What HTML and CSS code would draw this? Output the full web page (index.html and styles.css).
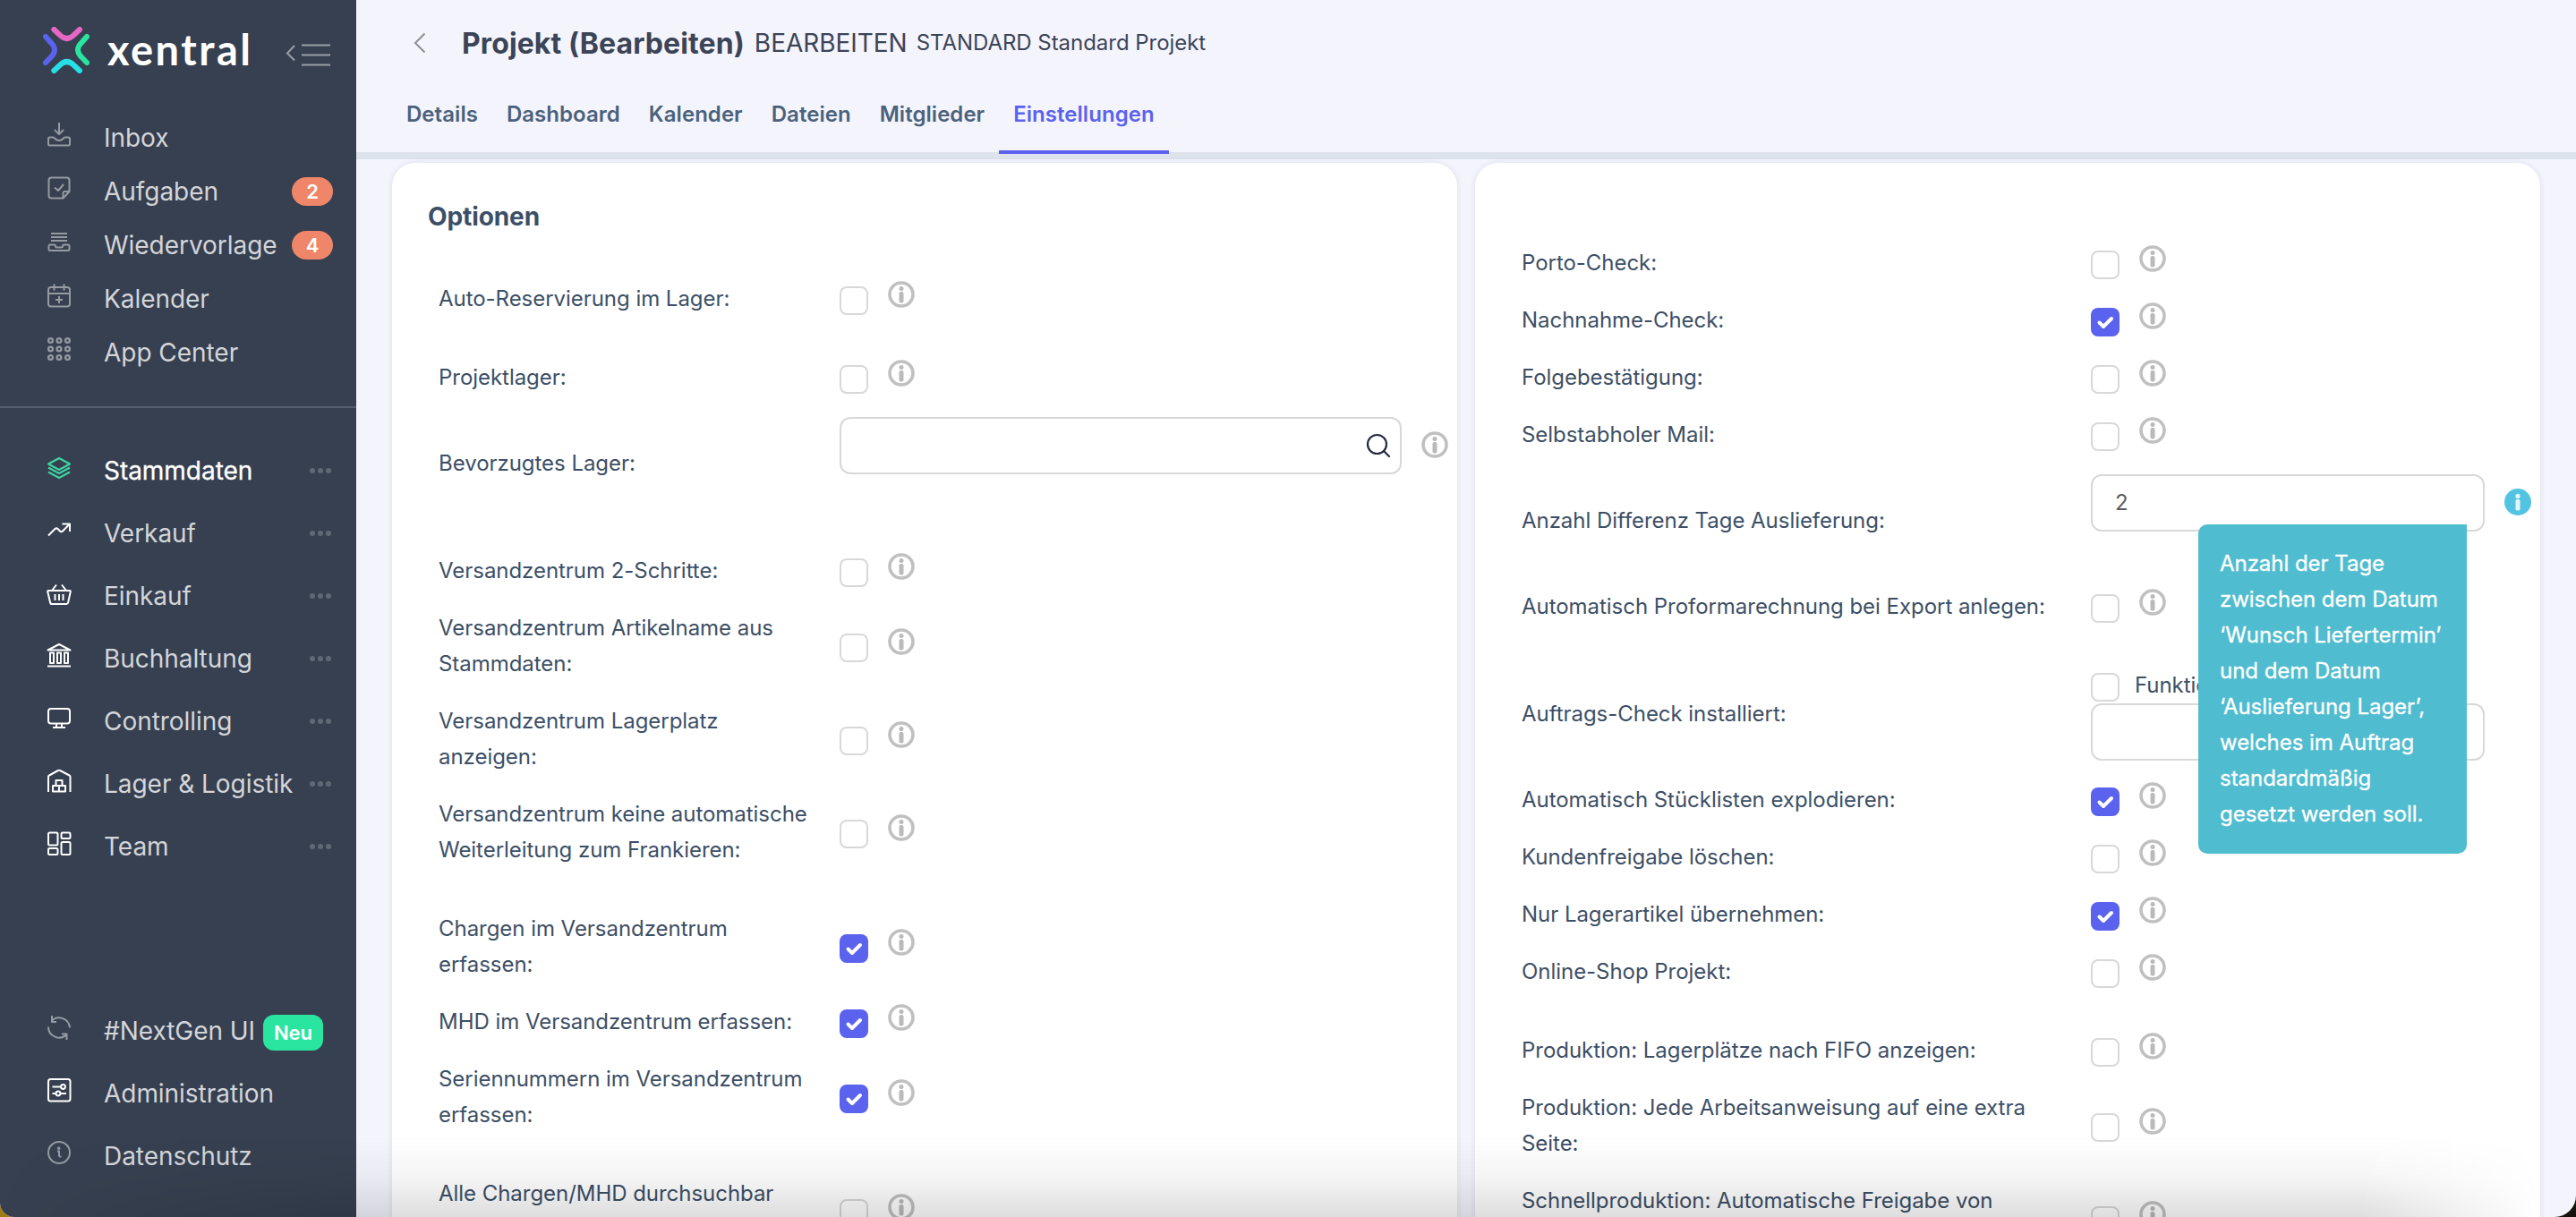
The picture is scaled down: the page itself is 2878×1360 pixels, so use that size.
FILE: index.html
```html
<!DOCTYPE html>
<html lang="de">
<head>
<meta charset="utf-8">
<title>Projekt (Bearbeiten)</title>
<link rel="stylesheet" href="styles.css">
</head>
<body>
<svg class="sprite" aria-hidden="true">
  <symbol id="info" viewBox="0 0 30 30"><circle cx="15" cy="15" r="13" fill="none" stroke="#c0c0c0" stroke-width="3.600"/><circle cx="15" cy="8.600" r="2.500" fill="#bababa"/><rect x="12.500" y="12" width="5" height="12.500" rx="2" fill="#bababa"/></symbol>
  <symbol id="info-on" viewBox="0 0 30 30"><circle cx="15" cy="15" r="15" fill="#53c3e2"/><circle cx="15" cy="8.400" r="2.600" fill="#e4f7fc"/><rect x="12.500" y="12" width="5" height="12.400" rx="1.600" fill="#e4f7fc"/></symbol>
  <symbol id="dots" viewBox="0 0 24 6"><circle cx="3" cy="3" r="3"/><circle cx="12" cy="3" r="3"/><circle cx="21" cy="3" r="3"/></symbol>
</svg>
<div class="app">
  <aside class="sidebar">
    <div class="brand">
      <svg class="logo" viewBox="0 0 156 156" fill="none" stroke-width="18" stroke-linecap="round"><path stroke="#e667c4" d="M37 9 56 27Q80 51 104 27L123 9"/><path stroke="#5b62ee" d="M9 33 26 52Q52 77 26 102L9 120"/><path stroke="#29e5a0" d="M147 33 130 52Q104 77 130 102L147 120"/><path stroke="#27e0e6" d="M37 147 56 129Q80 105 104 129L123 147"/></svg>
      <span class="wordmark">xentral</span>
      <svg class="collapse" viewBox="0 0 52 26" fill="none" stroke="#9a9fa8" stroke-width="2"><path d="M10 3 2 11.500l8 8M18 2.500h32M18 13.500h32M18 24.500h32"/></svg>
    </div>
    <nav class="nav nav-top">
      <a><svg viewBox="0 0 28 28"><path d="M14 1v12M9 9l5 5 5-5M3.500 17.500h4c2 0 2 3.500 6.500 3.500s4.500-3.500 6.500-3.500h4q1.500 0 1.500 1.500v6q0 1.500-1.500 1.500h-21Q2 26.500 2 25v-6q0-1.500 1.500-1.500z"/></svg>Inbox</a>
      <a><svg viewBox="0 0 28 28"><path d="M5.500 2.500h17q3 0 3 3V18l-7 7.500h-13q-3 0-3-3v-17q0-3 3-3zM18.500 25V20q0-2 2-2h5M9 13.500l4 3.500 6-7"/></svg>Aufgaben<b class="count">2</b></a>
      <a><svg viewBox="0 0 28 28"><path d="M5 5h18M5 9h18M5 13h18M4 17.500h4.500q1.500 0 1.500 1.500t1.500 1.500h5Q18 20.500 18 19t1.500-1.500H24q1.500 0 1.500 1.500v3.500q0 1.500-1.500 1.500H4q-1.500 0-1.500-1.500V19q0-1.500 1.500-1.500z"/></svg>Wiedervorlage<b class="count">4</b></a>
      <a><svg viewBox="0 0 28 28"><rect x="2" y="5" width="24" height="21.500" rx="3"/><path d="M2 12h24M8.500 1.500v7M19.500 1.500v7M14 15v8M10 19h8"/></svg>Kalender</a>
      <a><svg viewBox="0 0 28 28" class="thick"><circle cx="4.500" cy="4.500" r="2.400"/><circle cx="14" cy="4.500" r="2.400"/><circle cx="23.500" cy="4.500" r="2.400"/><circle cx="4.500" cy="14" r="2.400"/><circle cx="14" cy="14" r="2.400"/><circle cx="23.500" cy="14" r="2.400"/><circle cx="4.500" cy="23.500" r="2.400"/><circle cx="14" cy="23.500" r="2.400"/><circle cx="23.500" cy="23.500" r="2.400"/></svg>App Center</a>
    </nav>
    <nav class="nav nav-main">
      <a class="active"><svg viewBox="0 0 28 28"><path d="M14 4 26 10.500 14 17 2 10.500zM2 14.500 14 21l12-6.500M2 19.500 14 26l12-6.500"/></svg>Stammdaten<svg class="dots"><use href="#dots"/></svg></a>
      <a><svg viewBox="0 0 28 28"><path d="M2 20.500 9.500 13q1.500-1.500 3 0l2.500 2.500q1.500 1.500 3 0L25.500 8M17.500 7.500H26V16"/></svg>Verkauf<svg class="dots"><use href="#dots"/></svg></a>
      <a><svg viewBox="0 0 28 28"><path d="M2 12h24q1 0 .8 1l-2.600 12q-.4 2-2 2H6q-1.700 0-2-2L1.200 13q-.2-1 .8-1zM11 5.500 6 12M17 5.500l5 6.500M9.500 16v7M14 16v7M18.500 16v7"/></svg>Einkauf<svg class="dots"><use href="#dots"/></svg></a>
      <a><svg viewBox="0 0 28 28"><path d="M14 2 26.500 8.500H1.500zM4 11.500h4v11.500H4zM12 11.500h4v11.500h-4zM20 11.500h4v11.500h-4zM1 26.500h26"/></svg>Buchhaltung<svg class="dots"><use href="#dots"/></svg></a>
      <a><svg viewBox="0 0 28 28"><rect x="2" y="4" width="24" height="16.500" rx="3"/><path d="M11 20.500v4M17 20.500v4M7 25h14"/></svg>Controlling<svg class="dots"><use href="#dots"/></svg></a>
      <a><svg viewBox="0 0 28 28"><path d="M2 27V10q0-1 1-1.500L13 3q1-.6 2 0L25.500 8.500q1 .5 1 1.500v17M10.500 14h7v6h-7zM7 20h7v6.500H7zM14 20h7v6.500h-7z"/></svg>Lager &amp; Logistik<svg class="dots"><use href="#dots"/></svg></a>
      <a><svg viewBox="0 0 28 28"><rect x="2" y="2.500" width="10.500" height="14" rx="1.500"/><rect x="16.500" y="2.500" width="10" height="6.500" rx="1.500"/><rect x="2" y="20" width="10.500" height="7" rx="1.500"/><rect x="16.500" y="13" width="10" height="14" rx="1.500"/></svg>Team<svg class="dots"><use href="#dots"/></svg></a>
    </nav>
    <nav class="nav nav-bottom">
      <a><svg viewBox="0 0 28 28" class="dim"><path d="M26 14.500A12 12 0 0 0 5.500 7M6 1v7h5M2 13.500A12 12 0 0 0 22.500 22M17 21.500h5.500V28"/></svg>#NextGen UI<b class="new">Neu</b></a>
      <a><svg viewBox="0 0 28 28"><rect x="2" y="2" width="24.500" height="24.500" rx="2.500"/><path d="M6.500 10.500h9.500M6.500 18h4M16 18h6"/><circle cx="18.500" cy="10.500" r="2.400"/><circle cx="13" cy="18" r="2.400"/></svg>Administration</a>
      <a><svg viewBox="0 0 28 28" class="dim"><circle cx="14" cy="14" r="12"/><path d="M12 12.500h2v4.500q0 2 2.500 1.500"/><circle cx="13.700" cy="9.300" r=".8"/></svg>Datenschutz</a>
    </nav>
  </aside>

  <main class="main">
    <header class="head">
      <div class="titlebar">
        <svg class="back" viewBox="0 0 14 24" fill="none" stroke="#8b8f96" stroke-width="2"><path d="M12.500 1.500 2 12l10.500 10.500"/></svg>
        <h1>Projekt (Bearbeiten)</h1><span class="mode">BEARBEITEN</span><span class="name">STANDARD Standard Projekt</span>
      </div>
      <div class="tabs">
        <a>Details</a><a>Dashboard</a><a>Kalender</a><a>Dateien</a><a>Mitglieder</a><a class="current">Einstellungen</a>
      </div>
    </header>

    <div class="cards">
      <section class="card card-left">
        <h2>Optionen</h2>
        <div class="row"><label>Auto-Reservierung im Lager:</label><div class="ctl"><i class="cb"></i><svg class="inf"><use href="#info"/></svg></div></div>
        <div class="row gap"><label>Projektlager:</label><div class="ctl"><i class="cb"></i><svg class="inf"><use href="#info"/></svg></div></div>
        <div class="row tall"><label>Bevorzugtes Lager:</label><div class="ctl"><div class="input wide"><svg class="search" viewBox="0 0 28 28" fill="none" stroke="#262b42" stroke-width="2.200" stroke-linecap="round"><circle cx="12.500" cy="12.500" r="10.500"/><path d="m20 20 6 6"/></svg></div><svg class="inf"><use href="#info"/></svg></div></div>
        <div class="row gap"><label>Versandzentrum 2-Schritte:</label><div class="ctl"><i class="cb"></i><svg class="inf"><use href="#info"/></svg></div></div>
        <div class="row"><label>Versandzentrum Artikelname aus<br>Stammdaten:</label><div class="ctl"><i class="cb"></i><svg class="inf"><use href="#info"/></svg></div></div>
        <div class="row"><label>Versandzentrum Lagerplatz<br>anzeigen:</label><div class="ctl"><i class="cb"></i><svg class="inf"><use href="#info"/></svg></div></div>
        <div class="row"><label>Versandzentrum keine automatische<br>Weiterleitung zum Frankieren:</label><div class="ctl"><i class="cb"></i><svg class="inf"><use href="#info"/></svg></div></div>
        <div class="row gap"><label>Chargen im Versandzentrum<br>erfassen:</label><div class="ctl"><i class="cb on"><svg viewBox="0 0 32 32"><path d="m9.500 16.500 4.500 4.500 9-9"/></svg></i><svg class="inf"><use href="#info"/></svg></div></div>
        <div class="row"><label>MHD im Versandzentrum erfassen:</label><div class="ctl"><i class="cb on"><svg viewBox="0 0 32 32"><path d="m9.500 16.500 4.500 4.500 9-9"/></svg></i><svg class="inf"><use href="#info"/></svg></div></div>
        <div class="row"><label>Seriennummern im Versandzentrum<br>erfassen:</label><div class="ctl"><i class="cb on"><svg viewBox="0 0 32 32"><path d="m9.500 16.500 4.500 4.500 9-9"/></svg></i><svg class="inf"><use href="#info"/></svg></div></div>
        <div class="row gap"><label>Alle Chargen/MHD durchsuchbar<br>&nbsp;</label><div class="ctl"><i class="cb"></i><svg class="inf"><use href="#info"/></svg></div></div>
      </section>

      <section class="card card-right">
        <div class="row"><label>Porto-Check:</label><div class="ctl"><i class="cb"></i><svg class="inf"><use href="#info"/></svg></div></div>
        <div class="row"><label>Nachnahme-Check:</label><div class="ctl"><i class="cb on"><svg viewBox="0 0 32 32"><path d="m9.500 16.500 4.500 4.500 9-9"/></svg></i><svg class="inf"><use href="#info"/></svg></div></div>
        <div class="row"><label>Folgebestätigung:</label><div class="ctl"><i class="cb"></i><svg class="inf"><use href="#info"/></svg></div></div>
        <div class="row"><label>Selbstabholer Mail:</label><div class="ctl"><i class="cb"></i><svg class="inf"><use href="#info"/></svg></div></div>
        <div class="row tall"><label>Anzahl Differenz Tage Auslieferung:</label><div class="ctl"><div class="input">2</div><svg class="inf"><use href="#info-on"/></svg>
          <div class="tooltip">Anzahl der Tage<br>zwischen dem Datum<br>‘Wunsch Liefertermin’<br>und dem Datum<br>‘Auslieferung Lager’,<br>welches im Auftrag<br>standardmäßig<br>gesetzt werden soll.</div></div></div>
        <div class="row"><label>Automatisch Proformarechnung bei Export anlegen:</label><div class="ctl"><i class="cb"></i><svg class="inf"><use href="#info"/></svg></div></div>
        <div class="row stacked"><label>Auftrags-Check installiert:</label><div class="stack"><div class="option"><i class="cb"></i><span>Funktion</span></div><div class="input"></div></div></div>
        <div class="row"><label>Automatisch Stücklisten explodieren:</label><div class="ctl"><i class="cb on"><svg viewBox="0 0 32 32"><path d="m9.500 16.500 4.500 4.500 9-9"/></svg></i><svg class="inf"><use href="#info"/></svg></div></div>
        <div class="row"><label>Kundenfreigabe löschen:</label><div class="ctl"><i class="cb"></i><svg class="inf"><use href="#info"/></svg></div></div>
        <div class="row"><label>Nur Lagerartikel übernehmen:</label><div class="ctl"><i class="cb on"><svg viewBox="0 0 32 32"><path d="m9.500 16.500 4.500 4.500 9-9"/></svg></i><svg class="inf"><use href="#info"/></svg></div></div>
        <div class="row"><label>Online-Shop Projekt:</label><div class="ctl"><i class="cb"></i><svg class="inf"><use href="#info"/></svg></div></div>
        <div class="row gap"><label>Produktion: Lagerplätze nach FIFO anzeigen:</label><div class="ctl"><i class="cb"></i><svg class="inf"><use href="#info"/></svg></div></div>
        <div class="row"><label>Produktion: Jede Arbeitsanweisung auf eine extra<br>Seite:</label><div class="ctl"><i class="cb"></i><svg class="inf"><use href="#info"/></svg></div></div>
        <div class="row"><label>Schnellproduktion: Automatische Freigabe von<br>&nbsp;</label><div class="ctl"><i class="cb"></i><svg class="inf"><use href="#info"/></svg></div></div>
      </section>
    </div>
  </main>
  <div class="shade"></div>
</div>
</body>
</html>
```
FILE: styles.css
```css
* { box-sizing: border-box; }
html { background: linear-gradient(90deg, #a07c12 0, #a07c12 50%, #14120a 50%); }
body {
  margin: 0;
  height: 1360px;
  overflow: hidden;
  font-family: Inter, "Liberation Sans", sans-serif;
  font-size: 24px;
  line-height: 40px;
  letter-spacing: -.04px;
  color: #3d4f66;
}
.sprite { display: none; }
.app {
  position: relative;
  display: flex;
  height: 1360px;
  overflow: hidden;
  border-radius: 0 0 24px 16px;
  background: #f4f4fd;
}

/* Sidebar */
.sidebar {
  flex: none;
  display: flex;
  flex-direction: column;
  width: 398px;
  background: #364050;
}
.brand { display: flex; height: 124px; padding: 30px 27px 0 48px; }
.logo { width: 52px; height: 52px; }
.wordmark {
  margin: -1px 0 0 20px;
  font: 700 47px/52px Lato, sans-serif;
  letter-spacing: 2.500px;
  color: #fff;
}
.collapse { width: 52px; height: 26px; margin: 18px 0 0 auto; }
.nav { display: flex; flex-direction: column; }
.nav a {
  display: flex;
  align-items: center;
  height: 70px;
  padding: 0 26px 0 52px;
  font-size: 28px;
  color: #d3d5d9;
  white-space: nowrap;
}
.nav svg {
  width: 28px;
  height: 28px;
  margin: 0 36px 8px 0;
  fill: none;
  stroke: #fff;
  stroke-width: 2;
  stroke-linejoin: round;
}
.nav-top { height: 332px; border-bottom: 2px solid #55606e; }
.nav-top a { height: 60px; }
.nav-top svg { stroke: #959aa3; }
.nav .thick { stroke-width: 2.300; }
.nav .dim { stroke: #959aa3; }
.nav-main { padding-top: 35px; }
.nav-main a { padding-right: 28px; }
.nav .active { color: #fff; -webkit-text-stroke: .3px #fff; }
.nav .active svg { stroke: #3fd6a2; }
.nav .dots, .nav .active .dots {
  width: 24px;
  height: 6px;
  margin: 0 0 0 auto;
  fill: #5f6976;
  stroke: none;
}
.nav-bottom { margin-top: 136px; }
.count {
  width: 46px;
  height: 32px;
  margin-left: auto;
  border-radius: 16px;
  background: #f08669;
  font: 600 22px/32px Inter, sans-serif;
  color: #fff;
  text-align: center;
}
.new {
  width: 67px;
  height: 40px;
  margin: 3px 0 0 auto;
  border-radius: 12px;
  background: #29e5a0;
  font: 600 22px/40px Inter, sans-serif;
  color: #fff;
  text-align: center;
}
.nav-bottom a { padding-right: 37px; }

/* Page header */
.main { flex: 1; min-width: 0; }
.head { height: 178px; border-bottom: 8px solid #dde3ec; }
.titlebar {
  display: flex;
  align-items: baseline;
  height: 96px;
  padding: 29px 0 0 64px;
  color: #3c4457;
  white-space: nowrap;
}
.back { align-self: flex-start; width: 14px; height: 24px; margin: 7px 40px 0 0; }
h1 { margin: 0; font-size: 32px; font-weight: 700; line-height: 40px; letter-spacing: .1px; }
.mode { margin-left: 11px; font-size: 28px; position: relative; top: -2px; }
.name { margin-left: 10px; position: relative; top: -4px; }
.tabs { display: flex; height: 76px; padding-left: 40px; }
.tabs a {
  height: 76px;
  padding: 12px 16px 0;
  font-weight: 600;
  letter-spacing: .04px;
  color: #4b627c;
}
.tabs .current { border-bottom: 4px solid #5b62ee; color: #5b62ee; }

/* Cards */
.cards { display: flex; gap: 20px; padding: 4px 40px 0; }
.card {
  flex: 1;
  height: 1300px;
  border-radius: 26px 26px 0 0;
  background: #fff;
  box-shadow: 0 0 6px rgba(60, 60, 90, .12);
}
.card-left { padding: 40px 0 0 52px; }
.card-right { padding: 80px 0 0 52px; }
h2 { margin: 0 0 40px -12px; font-size: 28px; font-weight: 700; line-height: 40px; letter-spacing: -.1px; }
.row { display: flex; align-items: center; padding: 12px 0; margin: 0; }
.row label { flex: none; width: 448px; white-space: nowrap; }
.card-right label { width: 636px; }
.gap { margin-top: 24px; }
.ctl { position: relative; display: flex; height: 64px; margin: -12px 0; }
.cb {
  width: 32px;
  height: 32px;
  margin-top: 18px;
  border: 2px solid #d8d8d8;
  border-radius: 8px;
  background: #fff;
}
.cb.on { border: 0; background: #5b62ee; }
.cb svg {
  display: block;
  width: 32px;
  height: 32px;
  fill: none;
  stroke: #fff;
  stroke-width: 4;
  stroke-linecap: round;
  stroke-linejoin: round;
}
.inf { width: 30px; height: 30px; margin: 12px 0 0 22px; }
.tall { height: 128px; }
.tall .ctl { height: 128px; padding-top: 12px; }
.tall .inf { margin-top: 16px; }
.input {
  width: 440px;
  height: 64px;
  padding: 10px 25px;
  border: 2px solid #d8d8d8;
  border-radius: 12px;
  background: #fff;
  color: #5d5d5d;
}
.input.wide { display: flex; justify-content: flex-end; width: 628px; padding: 16px 10px; }
.search { width: 28px; height: 28px; }
.stacked { height: 152px; padding: 0; }
.stacked label { padding-top: 24px; }
.stack { display: flex; flex-direction: column; align-self: flex-start; gap: 2px; padding-top: 42px; }
.option { display: flex; height: 32px; }
.option .cb { margin: 0 17px 0 0; }
.option span { line-height: 28px; }
.tooltip {
  position: absolute;
  z-index: 2;
  top: 68px;
  left: 120px;
  width: 300px;
  height: 368px;
  padding: 24px;
  border-radius: 10px 0 10px 10px;
  background: #50bccf;
  color: #fff;
  -webkit-text-stroke: .3px #fff;
  white-space: nowrap;
}

/* Darkening along the window's lower edge */
.shade {
  position: absolute;
  z-index: 3;
  left: 0;
  right: 0;
  bottom: 0;
  height: 90px;
  background: linear-gradient(rgba(0, 0, 0, 0), rgba(0, 0, 0, .04) 50%, rgba(0, 0, 0, .13));
  mask-image: linear-gradient(90deg, transparent, #000 400px, #000 calc(100% - 240px), transparent calc(100% - 40px));
}
```
